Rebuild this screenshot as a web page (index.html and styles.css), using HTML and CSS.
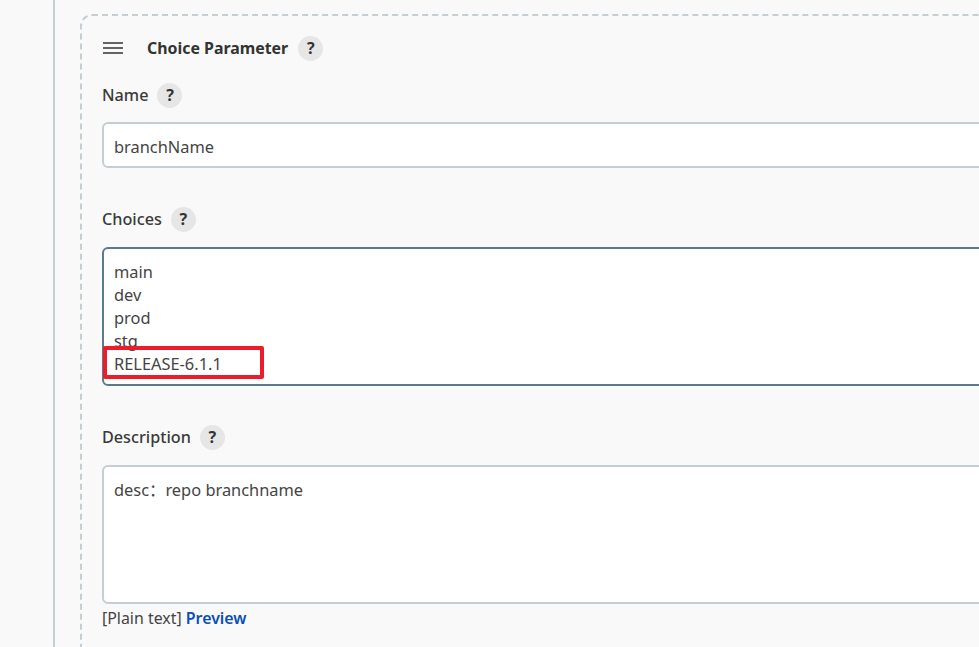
FILE: index.html
```html
<!DOCTYPE html>
<html lang="zh-CN">
<head>
<meta charset="utf-8">
<title>Choice Parameter</title>
<link rel="stylesheet" href="styles.css">
</head>
<body>
<main class="page">
  <section class="card">
    <header class="card-head">
      <svg class="handle" width="20" height="12" viewBox="0 0 20 12"><path d="M0 1h20M0 6h20M0 11h20" stroke="#333" stroke-width="1.4" fill="none"/></svg>
      <h2 class="card-title">Choice Parameter</h2>
      <span class="help">?</span>
    </header>
    <div class="field field-name">
      <div class="label-row"><span class="label">Name</span><span class="help">?</span></div>
      <div class="input">branchName</div>
    </div>
    <div class="field field-choices">
      <div class="label-row"><span class="label">Choices</span><span class="help">?</span></div>
      <div class="input area area-choices">main<br>dev<br>prod<br>stg<br>RELEASE-6.1.1</div>
      <div class="highlight"></div>
    </div>
    <div class="field field-desc">
      <div class="label-row"><span class="label">Description</span><span class="help">?</span></div>
      <div class="input area area-desc">desc：repo branchname</div>
      <div class="hint">[Plain text] <a class="link" href="#">Preview</a></div>
    </div>
  </section>
</main>
</body>
</html>
```
FILE: styles.css
```css
html, body { margin: 0; height: 100%; }
body {
  background: #f9f9f9;
  font-family: "Noto Sans", "Noto Sans CJK SC", sans-serif;
  color: #333;
  overflow: hidden;
}
.page {
  margin-left: 53px;
  width: 926px;
  height: 647px;
  overflow: hidden;
  border-left: 2px solid #c4ced3;
  padding: 14px 0 0 25px;
  box-sizing: border-box;
}
.card {
  width: 1100px;
  height: 700px;
  box-sizing: border-box;
  border: 2px dashed #c4ced3;
  border-radius: 12px;
  padding: 18px 0 0 20px;
}
.card-head { display: flex; align-items: center; height: 28px; padding-left: 1px; }
.handle { margin-right: 24px; }
.card-title { margin: 0 10px 0 0; font-size: 15.9px; font-weight: 700; line-height: 28px; }
.help {
  width: 25px; height: 25px; border-radius: 50%;
  background: #e6e6e6; color: #333;
  font-size: 16px; font-weight: 700; line-height: 25px; text-align: center;
  display: inline-block;
}
.label-row { display: flex; align-items: center; gap: 9px; height: 28px; }
.label { font-size: 16.2px; font-weight: 500; color: #3a3a3a; }
.field { position: relative; }
.field-name { margin-top: 19px; }
.field-choices { margin-top: 37px; }
.field-desc { margin-top: 37px; }
.input {
  margin-top: 13px;
  box-sizing: border-box;
  height: 46px;
  background: #fff;
  border: 2px solid #c4ced3;
  border-radius: 6px;
  padding: 0 10px;
  font-size: 16.4px;
  line-height: 46px;
  color: #444;
}
.area { line-height: 23px; padding-top: 11px; }
.area-choices { height: 139px; border-color: #5b7a8c; margin-top: 14px; }
.area-desc { height: 139px; margin-top: 14px; }
.highlight {
  position: absolute; left: 1px; top: 141px;
  width: 161px; height: 33px; box-sizing: border-box;
  border: 4px solid #ec1c2b; border-radius: 2px;
}
.hint { font-size: 15.9px; line-height: 24px; margin-top: 2px; color: #444; }
.link { color: #0b4fb5; font-weight: 600; text-decoration: none; }
```
